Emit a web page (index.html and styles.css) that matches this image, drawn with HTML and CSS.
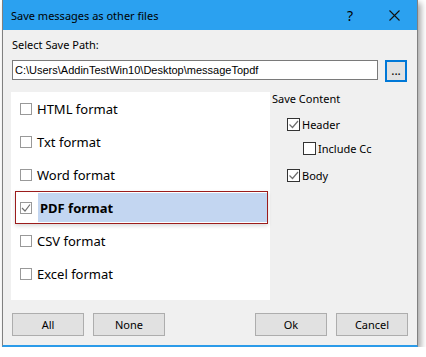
FILE: index.html
```html
<!DOCTYPE html>
<html lang="en">
<head>
  <meta charset="UTF-8" />
  <title>Save messages as other files</title>
  <link rel="stylesheet" href="styles.css">
</head>
<body>
  <div class="window">
    <div class="title-bar">
      <span class="title">Save messages as other files</span>
      <span class="help">?</span>
      <svg class="close" width="11" height="11" viewBox="0 0 11 11">
        <path d="M0.5 0.5 L10.5 10.5 M10.5 0.5 L0.5 10.5" stroke="#111" stroke-width="1.1" fill="none" />
      </svg>
    </div>
    <div class="content">
      <div class="path-label">Select Save Path:</div>
      <div class="path-row">
        <div class="path-input">C:\Users\AddinTestWin10\Desktop\messageTopdf</div>
        <button class="browse-button">...</button>
      </div>
      <div class="main">
        <div class="format-list">
          <div class="format-item"><span class="box"></span><span class="label">HTML format</span></div>
          <div class="format-item"><span class="box"></span><span class="label">Txt format</span></div>
          <div class="format-item"><span class="box"></span><span class="label">Word format</span></div>
          <div class="format-item selected">
            <span class="box">
              <svg width="10" height="10" viewBox="0 0 10 10"><path d="M1 5 L4 8 L9 1.5" stroke="#707070" stroke-width="1.2" fill="none" /></svg>
            </span>
            <span class="label">PDF format</span>
          </div>
          <div class="format-item"><span class="box"></span><span class="label">CSV format</span></div>
          <div class="format-item"><span class="box"></span><span class="label">Excel format</span></div>
        </div>
        <div class="save-content">
          <div class="group-title">Save Content</div>
          <div class="option header">
            <span class="cbox">
              <svg width="11" height="11" viewBox="0 0 11 11"><path d="M1.5 5.5 L4.5 8.5 L10 2" stroke="#707070" stroke-width="1.2" fill="none" /></svg>
            </span>Header
          </div>
          <div class="option sub"><span class="cbox"></span>Include Cc</div>
          <div class="option body-option">
            <span class="cbox">
              <svg width="11" height="11" viewBox="0 0 11 11"><path d="M1.5 5.5 L4.5 8.5 L10 2" stroke="#707070" stroke-width="1.2" fill="none" /></svg>
            </span>Body
          </div>
        </div>
      </div>
      <div class="button-row">
        <button class="btn">All</button>
        <button class="btn">None</button>
        <span class="spacer"></span>
        <button class="btn">Ok</button>
        <button class="btn">Cancel</button>
      </div>
    </div>
  </div>
</body>
</html>
```

FILE: styles.css
```css
body {
  margin: 0;
  background: #fff;
  font-family: 'Noto Sans', 'Open Sans', sans-serif;
  font-size: 11px;
  color: #000;
}
.window {
  margin-left: 2px;
  width: 416px;
  box-sizing: border-box;
  background: #f0f0f0;
  border-left: 1px solid #808080;
  border-right: 1px solid #808080;
  border-bottom: 2px solid #2b9be9;
  box-shadow: 3px 3px 6px rgba(0,0,0,0.35);
}
.title-bar {
  height: 30px;
  background: #2ba1f0;
  display: flex;
  align-items: center;
  padding-left: 8px;
}
.title {
  flex: 1;
  font-size: 11px;
}
.help {
  font-size: 14px;
  margin-right: 36px;
}
.close {
  margin-right: 17px;
}
.content {
  padding: 0 9px 9px 8px;
}
.path-label {
  margin-top: 8px;
  height: 14px;
  line-height: 14px;
  padding-left: 1px;
}
.path-row {
  display: flex;
  align-items: flex-start;
  margin-top: 8px;
  padding-left: 1px;
}
.path-input {
  width: 366px;
  height: 20px;
  box-sizing: border-box;
  border: 1px solid #7a7a7a;
  background: #fff;
  font-family: 'Liberation Sans', Arial, sans-serif;
  line-height: 18px;
  padding-left: 2px;
  white-space: nowrap;
  overflow: hidden;
}
.browse-button {
  width: 22px;
  height: 22px;
  margin-left: 7px;
  padding: 0;
  border: 2px solid #0078d7;
  background: #e1e1e1;
  font-family: inherit;
  font-size: 12px;
  line-height: 12px;
}
.main {
  display: flex;
  margin-top: 10px;
}
.format-list {
  width: 259px;
  height: 208px;
  background: #fff;
}
.format-item {
  height: 33px;
  display: flex;
  align-items: center;
  margin-left: 4px;
  width: 253px;
  box-sizing: border-box;
  border: 1px solid transparent;
  padding-left: 4px;
}
.format-item .box {
  width: 12px;
  height: 12px;
  box-sizing: border-box;
  border: 1px solid #999;
  display: flex;
  align-items: center;
  justify-content: center;
}
.format-item .label {
  margin-left: 5px;
  font-size: 13px;
}
.format-item.selected {
  border-color: #9b1c1c;
  box-shadow: 0 2px 4px rgba(0,0,0,0.15);
}
.format-item.selected .label {
  flex: 1;
  align-self: stretch;
  display: flex;
  align-items: center;
  margin: 1px 0 1px 6px;
  padding-left: 2px;
  background: #c3d6f1;
  font-weight: bold;
}
.save-content {
  margin-left: 2px;
}
.group-title {
  height: 14px;
  line-height: 14px;
}
.option {
  display: flex;
  align-items: center;
  margin-left: 15px;
  height: 13px;
}
.option.header {
  margin-top: 12px;
}
.option.sub {
  margin-left: 31px;
  margin-top: 11px;
}
.option.body-option {
  margin-top: 14px;
}
.option .cbox {
  width: 13px;
  height: 13px;
  box-sizing: border-box;
  border: 1px solid #333;
  background: #fff;
  margin-right: 2px;
  display: flex;
  align-items: center;
  justify-content: center;
}
.button-row {
  display: flex;
  margin-top: 13px;
  padding-left: 1px;
}
.btn {
  width: 72px;
  height: 23px;
  border: 1px solid #adadad;
  background: #e1e1e1;
  font-family: inherit;
  font-size: 11px;
  padding: 0;
  margin-right: 9px;
}
.btn:last-child {
  margin-right: 0;
}
.spacer {
  flex: 1;
}
```
